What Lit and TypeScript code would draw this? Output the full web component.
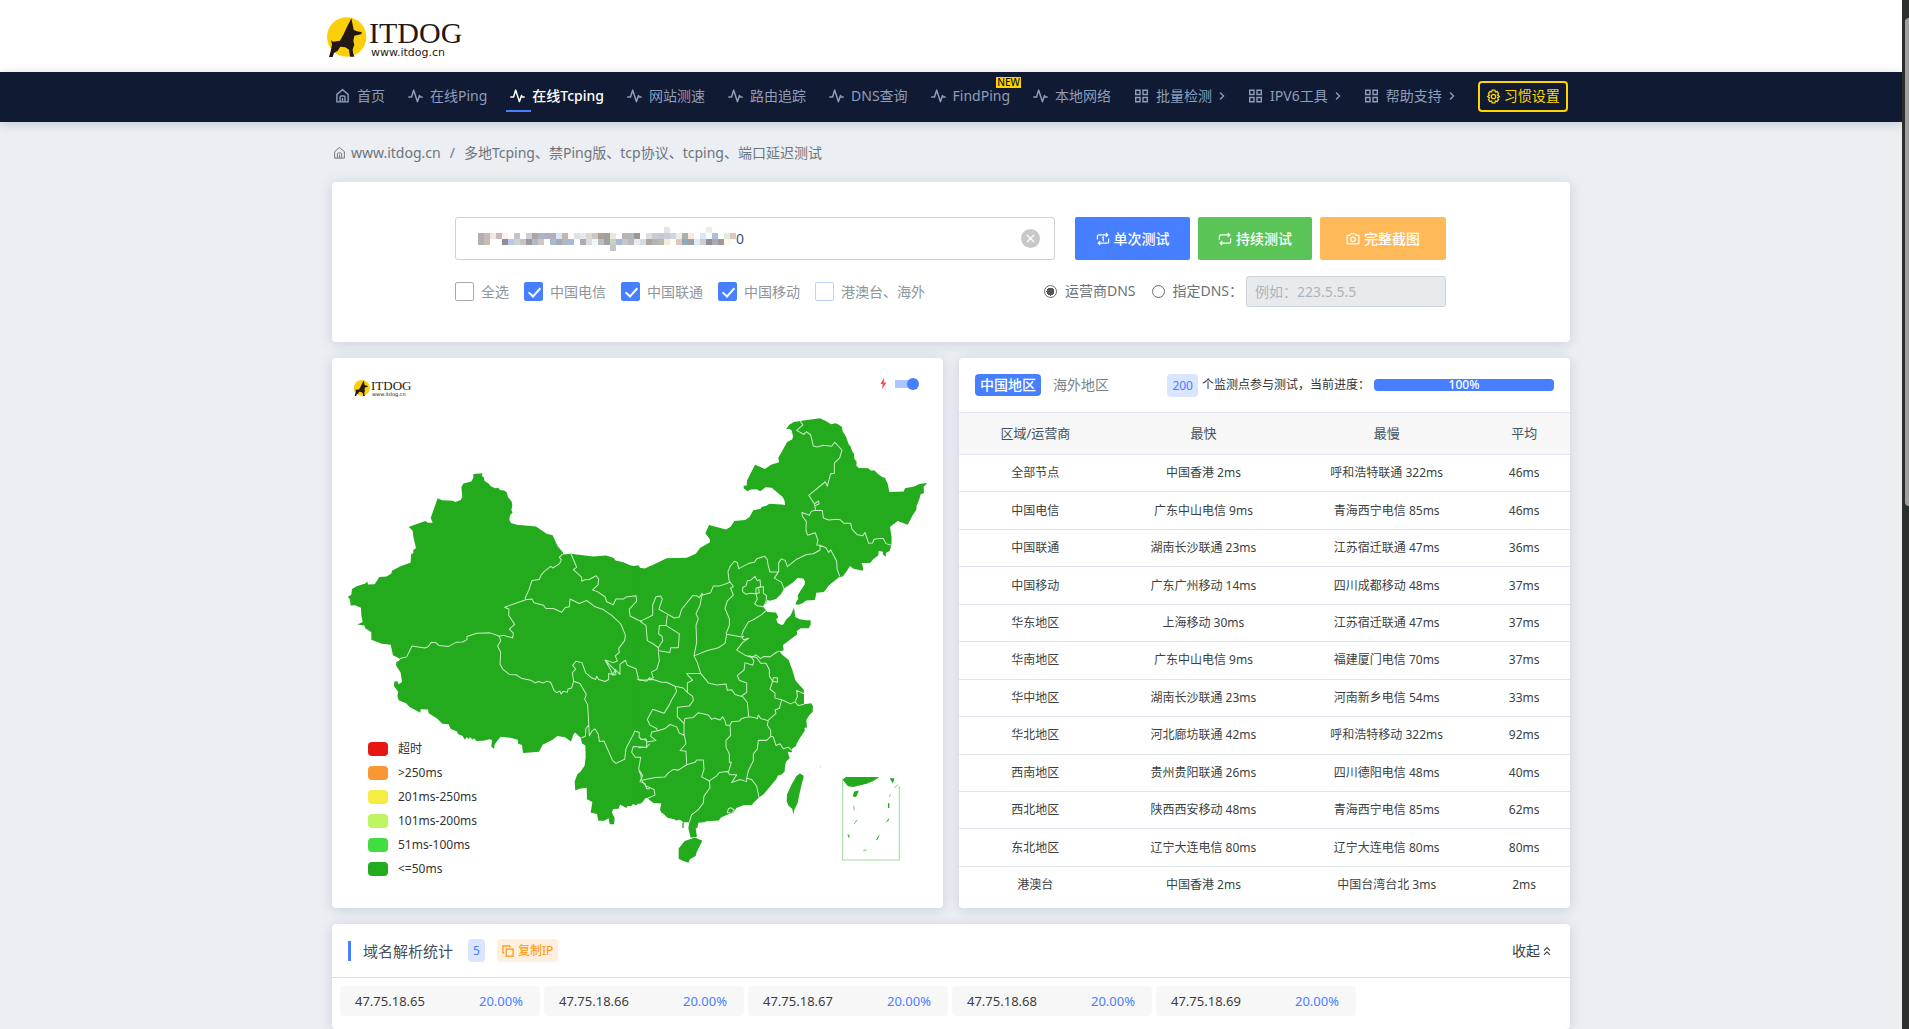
import { LitElement, html, css, svg, nothing } from "lit";
import { customElement } from "lit/decorators.js";

const homeIcon = html`<svg class="ico" viewBox="0 0 16 16" aria-hidden="true"><path d="M2 6.3 8 1.2l6 5.1V14.3H2Z M5.4 14V9a1 1 0 0 1 1-1h3.2a1 1 0 0 1 1 1v5 M8 10v4.2"/></svg>`;
const pulseIcon = html`<svg class="ico pulse" viewBox="0 0 16 16" aria-hidden="true"><path d="M.3 9H3.8L6 1.7l4 12.3L12.3 7.5l.8 1.5H15.7"/></svg>`;
const gridIcon = html`<svg class="ico" viewBox="0 0 16 16" aria-hidden="true"><path d="M1.8 1.8h4.6v4.6H1.8Z M9.6 1.8h4.6v4.6H9.6Z M1.8 9.6h4.6v4.6H1.8Z M9.6 9.6h4.6v4.6H9.6Z"/></svg>`;
const chevronIcon = html`<svg class="chev" viewBox="0 0 6 10" aria-hidden="true"><path d="M1 1.5 4.6 5 1 8.5"/></svg>`;
const gearIcon = html`<svg class="gear" viewBox="0 0 16 16" aria-hidden="true"><path d="M6.6 1.2h2.8l.6 1.9 1.9-.4 1.5 2.4L12.3 6.5l1.9 1.5-1.9 1.5 1.1 1.4-1.5 2.4-1.9-.4-.6 1.9H6.6l-.6-1.9-1.9.4-1.5-2.4L3.7 9.5 1.8 8l1.9-1.5L2.6 5.1l1.5-2.4 1.9.4Z"/><circle cx="8" cy="8" r="2.3"/></svg>`;
const onceIcon = html`<svg class="bico" viewBox="0 0 16 16" aria-hidden="true"><path d="M1.6 8.5V5A1.7 1.7 0 0 1 3.3 3.3H13 M11.2 1l2.3 2.3-2.3 2.3 M14.4 7.5V11a1.7 1.7 0 0 1-1.7 1.7H3 M4.8 15l-2.3-2.3 2.3-2.3 M7 6.6l1.3-.8v4.8"/></svg>`;
const loopIcon = html`<svg class="bico" viewBox="0 0 16 16" aria-hidden="true"><path d="M1.6 9V5A1.7 1.7 0 0 1 3.3 3.3H13 M11.2 1l2.3 2.3-2.3 2.3 M14.4 7V11a1.7 1.7 0 0 1-1.7 1.7H3 M4.8 15l-2.3-2.3 2.3-2.3"/></svg>`;
const cameraIcon = html`<svg class="bico" viewBox="0 0 16 16" aria-hidden="true"><path d="M1.2 4.8a1 1 0 0 1 1-1h2L5.6 2h4.8l1.4 1.8h2a1 1 0 0 1 1 1v7.7a1 1 0 0 1-1 1H2.2a1 1 0 0 1-1-1Z"/><circle cx="8" cy="8.4" r="2.6"/></svg>`;
const copyIcon = html`<svg class="copyico" viewBox="0 0 13 13" aria-hidden="true"><path d="M4.5 4.5h7.5v7.5H4.5Z M2.5 8.5H1V1h7.5v1.5"/></svg>`;
const upIcon = html`<svg class="upico" viewBox="0 0 8 10" aria-hidden="true"><path d="M1 4.6 4 1.6l3 3 M1 8.8l3-3 3 3"/></svg>`;
const boltIcon = html`<svg class="bolt" viewBox="0 0 8 13" aria-hidden="true"><path d="M4.6 0 .5 7H3l-.6 6L7.4 5.4H4.5Z"/></svg>`;

const dogMark = svg`
  <circle cx="80" cy="81" r="59" fill="#fccf0b"/>
  <path fill="#231815" d="M94 25 98 44 101 59 109 63 126 67 123 73 103 77 100 92 103 104 98 118 99 128 103 140H90L87 119 76 112 61 110 53 122 42 129 38 141H27L33 120 36 104 33 90 39 95 60 92 70 74 78 57Z"/>`;

const logo = html`<svg class="logo" viewBox="0 0 48 44" aria-hidden="true"><g transform="translate(-7 -5) scale(.33333)">${dogMark}</g></svg>`;

const NAV: { label: string; kind: "home" | "pulse" | "grid"; active?: boolean; badge?: string }[] = [
  { label: "首页", kind: "home" },
  { label: "在线Ping", kind: "pulse" },
  { label: "在线Tcping", kind: "pulse", active: true },
  { label: "网站测速", kind: "pulse" },
  { label: "路由追踪", kind: "pulse" },
  { label: "DNS查询", kind: "pulse" },
  { label: "FindPing", kind: "pulse", badge: "NEW" },
  { label: "本地网络", kind: "pulse" },
  { label: "批量检测", kind: "grid" },
  { label: "IPV6工具", kind: "grid" },
  { label: "帮助支持", kind: "grid" },
];

const CARRIERS: [string, boolean, string][] = [
  ["全选", false, "dark"],
  ["中国电信", true, ""],
  ["中国联通", true, ""],
  ["中国移动", true, ""],
  ["港澳台、海外", false, ""],
];

const ROWS = [
  ["全部节点", "中国香港 2ms", "呼和浩特联通 322ms", "46ms"],
  ["中国电信", "广东中山电信 9ms", "青海西宁电信 85ms", "46ms"],
  ["中国联通", "湖南长沙联通 23ms", "江苏宿迁联通 47ms", "36ms"],
  ["中国移动", "广东广州移动 14ms", "四川成都移动 48ms", "37ms"],
  ["华东地区", "上海移动 30ms", "江苏宿迁联通 47ms", "37ms"],
  ["华南地区", "广东中山电信 9ms", "福建厦门电信 70ms", "37ms"],
  ["华中地区", "湖南长沙联通 23ms", "河南新乡电信 54ms", "33ms"],
  ["华北地区", "河北廊坊联通 42ms", "呼和浩特移动 322ms", "92ms"],
  ["西南地区", "贵州贵阳联通 26ms", "四川德阳电信 48ms", "40ms"],
  ["西北地区", "陕西西安移动 48ms", "青海西宁电信 85ms", "62ms"],
  ["东北地区", "辽宁大连电信 80ms", "辽宁大连电信 80ms", "80ms"],
  ["港澳台", "中国香港 2ms", "中国台湾台北 3ms", "2ms"],
];

const LEGEND = [
  ["超时", "#e61610"],
  [">250ms", "#f89833"],
  ["201ms-250ms", "#f6ed44"],
  ["101ms-200ms", "#bef663"],
  ["51ms-100ms", "#42dd3f"],
  ["<=50ms", "#24aa1d"],
];

const IPS = ["47.75.18.65", "47.75.18.66", "47.75.18.67", "47.75.18.68", "47.75.18.69"];

// Pixelated mask over the tested address: [row, first column, colours]
const MASK: [number, number, string][] = [
  [0, 31, "e4e4e8"],
  [0, 38, "f4ece0"],
  [1, 0, "b0b0b4 c8bab6 f2e9e0 c8bab6 fcf2ec - bfc5c8 - cfcdd5 b0a49c acb4c6 b0aec6 b0b2b6 d4e8fc c6b6ae - dde2e4 e0e8f2 ded8cc c8c8c8 ab9f96 a0a0a2 ece8d8 - bcb4b0 b0b8be 9e949a - dcdce4 cccccf c2cad8 cccad2 c8d8ea f4ece0 aab0ae faeade - dce6f2 f4ffff b0bedc - e6e8e2 dec8bc"],
  [2, 0, "b0b0b4 ceb8b4 - - 8f8f95 b4cae6 cfd1d4 bec4c8 9f989c acbacc d2c6c2 - a4bcd0 a8aaae b0b8be a4bcd6 - aaacb0 dcdce4 ecf8fa bcbcc0 a0a0a2 ceccc4 a4bad0 c0c8cc b8babe ececf0 d2dae6 b0a49c b0b2b6 b8bab2 faeade - dec8bc 90a8b8 9e9fa2 dcecf4 d0ccc6 8f8f95 acacb0 9f989c fff6ee fafcfc"],
  [3, 22, "c4c4c4"],
];

const WEST =
  "M430 352 457 350 456 358 462 363 463 372 476 380 482 388 496 394 505 393 510 399 522 401 530 406 534 421 545 433 547 446 544 459 548 465 540 475 538 487 543 497 560 502 618 507 650 529 668 533 683 566 698 583 700 590 722 588 790 596 828 593 850 600 857 608 880 613 900 622 912 624 926 622 930 629 945 632 960 624 1000 640 1000 1290 960 1310 946 1311 938 1322 930 1328 925 1327 918 1333 910 1328 903 1335 893 1334 889 1340 870 1330 866 1342 849 1343 846 1354 854 1370 852 1388 839 1388 836 1370 823 1378 805 1378 801 1358 782 1354 787 1322 771 1314 770 1280 748 1283 736 1288 734 1262 742 1240 752 1232 764 1214 767 1190 766 1155 756 1149 752 1132 735 1117 730 1124 723 1143 705 1131 682 1127 668 1138 638 1153 627 1174 600 1176 579 1177 576 1154 565 1150 563 1138 541 1132 512 1129 502 1141 494 1152 492 1165 484 1159 486 1139 478 1137 460 1141 439 1142 432 1134 428 1138 420 1130 416 1137 410 1130 405 1138 397 1126 385 1122 380 1113 362 1106 356 1092 337 1091 322 1076 296 1060 294 1049 272 1048 271 1058 240 1042 228 1030 206 1021 202 1008 205 997 200 990 192 980 193 966 202 965 206 974 216 967 212 940 198 918 199 908 210 902 208 898 189 888 182 857 155 854 124 842 124 820 106 808 103 800 82 797 98 790 94 770 93 748 75 740 62 741 60 724 54 715 64 709 66 692 80 684 106 676 112 670 114 679 134 678 148 657 170 655 184 646 186 638 210 626 242 614 243 590 250 586 250 576 258 572 250 538 248 520 236 509 260 500 286 491 294 496 308 496 302 482 323 424 336 430 368 431 376 435 392 429 397 420 394 391 400 380 424 374 430 363Z";

const EAST =
  "M-20 640 0 630 14 632 30 625 80 601 140 600 167 588 181 570 210 554 210 546 196 527 207 503 258 516 272 508 283 491 315 488 328 480 340 459 362 455 366 449 378 447 388 440 425 442 435 444 434 432 428 420 395 393 377 391 361 403 350 397 332 398 322 403 311 394 311 387 320 386 321 371 345 325 375 337 393 325 417 317 415 304 425 287 441 258 457 249 459 240 455 223 449 219 439 219 447 207 461 198 480 195 540 187 559 196 573 205 587 202 594 205 606 213 608 226 615 236 619 244 626 264 632 271 636 284 642 292 643 307 650 316 649 327 656 334 685 335 692 342 704 342 713 351 728 362 736 364 737 370 743 380 748 405 791 404 795 394 806 392 823 389 836 382 862 378 851 390 852 408 842 412 838 427 830 446 829 458 818 474 803 502 773 491 750 509 755 540 754 563 749 580 738 585 737 597 729 590 729 582 716 580 715 592 699 605 690 615 665 615 670 632 668 638 640 632 630 624 620 640 608 655 598 657 567 681 552 701 529 703 525 725 499 726 486 735 475 739 466 737 470 728 475 722 473 711 484 694 494 679 495 669 490 661 472 660 460 672 432 691 424 706 408 722 390 727 382 725 378 735 369 743 378 756 382 760 408 762 415 775 409 782 412 792 424 799 430 797 438 783 452 770 462 748 466 775 479 782 498 785 512 785 512 798 506 808 482 808 470 817 472 826 456 838 429 858 431 874 418 876 427 887 446 902 458 935 466 962 479 977 491 990 492 1005 492 1033 514 1030 519 1040 518 1055 508 1066 499 1080 501 1102 494 1103 494 1112 480 1132 470 1149 468 1157 456 1165 456 1175 443 1174 449 1193 438 1203 435 1216 434 1232 424 1242 414 1244 409 1254 389 1278 371 1299 357 1309 340 1325 336 1331 310 1332 289 1340 281 1353 263 1359 243 1368 236 1377 200 1379 193 1382 175 1384 172 1399 167 1400 171 1425 152 1428 145 1400 148 1382 131 1382 131 1399 128 1399 128 1380 119 1375 108 1377 103 1373 82 1369 73 1359 65 1354 60 1346 64 1327 41 1325 33 1320 23 1311 16 1310 -20 1300Z";

const ISLANDS =
  "M152 1432 165 1427 187 1437 178 1455 170 1470 167 1482 150 1492 145 1502 130 1497 116 1490 116 1460 134 1438Z M480 1238 490 1244 491 1250 486 1265 478 1300 473 1325 463 1345 460 1360 457 1343 445 1333 440 1320 441 1300 455 1270 470 1245Z M607 1256 618 1248H718L700 1260 680 1268 640 1278 624 1276Z M749 1252H763L759 1268Z M643 1291 656 1288 651 1303 646 1308 638 1305Z M744 1325 748 1326 748 1340 744 1340Z M737 1384 747 1369 746 1377Z M708 1434 720 1416 713 1434Z M622 1418 628 1420 628 1432Z";

const ISLAND_LINES =
  "M641 1333 643 1347 M642 1388 652 1375 M670 1466 680 1464 M764 1280 773 1271 M748 1307 752 1300 M540 1218 542 1218 M128 1385V1398";

const WEST_LINES =
  "M698 589 688 598 694 606 688 618 668 630 662 625 643 640 633 651 628 664 606 667 597 694 586 718 587 724 524 746 537 752 536 770 554 797 538 811 550 823 548 837 520 829 505 833 M210 898 230 893 246 861 284 867 294 863 304 850 318 851 326 859 356 862 378 850 398 849 411 842 411 833 440 823 480 822 508 831 512 845 503 861 512 880 510 914 518 929 538 945 558 946 574 956 605 963 615 970 625 966 640 970 650 965 662 968 672 992 680 999 690 994 693 1003 700 995 712 998 714 988 725 985 731 965 750 972 769 1004 764 1018 773 1035 778 1126 786 1112 795 1106 805 1122 808 1143 822 1142 848 1200 858 1208 884 1196 888 1164 898 1145 910 1123 914 1112 928 1117 927 1130 935 1137 948 1136 950 1147 M776 1095 768 1105 766 1128 754 1132 M731 965 727 940 737 929 728 918 738 906 756 910 767 940 785 955 797 960 800 950 806 960 825 966 836 960 836 942 848 945 840 928 825 902 850 910 862 905 856 890 868 880 866 868 884 845 886 828 872 795 845 770 820 753 795 745 770 726 748 735 720 722 718 745 705 748 695 761 670 750 648 750 640 740 612 733 606 722 587 724 M723 588 740 628 730 635 755 657 755 669 765 665 778 664 798 653 806 662 804 680 788 695 802 700 825 715 830 730 850 739 858 722 880 722 888 716 918 712 920 728 898 752 900 772 924 784 935 788 M825 902 855 933 848 947 858 945 855 930 870 945 870 915 886 903 892 918 918 928 926 960 950 965 960 953 M960 1150 950 1160 910 1158 905 1175 916 1190 932 1190 926 1225 938 1245 930 1262 945 1268 950 1283 960 1283";

const EAST_LINES =
  "M480 195 489 207 470 223 492 235 499 227 512 236 520 269 532 272 550 267 575 270 584 258 606 281 599 304 583 320 583 350 572 351 562 388 556 375 506 415 523 440 527 459 547 460 550 482 566 488 590 486 600 487 612 498 632 498 636 515 652 532 668 535 675 525 686 557 698 556 702 545 720 543 730 543 738 558 754 563 M523 440 536 432 537 441 526 445 M527 459 514 462 508 474 486 466 487 477 499 492 498 520 503 533 526 526 534 548 530 562 540 563 558 570 566 584 572 576 590 610 591 632 599 655 M540 563 540 577 520 588 500 590 470 604 442 626 436 608 424 603 416 615 416 640 403 660 424 672 432 691 M416 642 390 642 384 620 382 605 374 595 350 603 344 612 325 617 296 632 292 614 283 610 270 626 264 640 267 667 270 672 240 683 220 683 212 703 188 710 186 705 178 718 170 712 158 712 125 752 118 775 103 778 80 765 57 752 67 722 62 713 48 715 38 740 38 770 0 788 M267 667 280 685 272 690 280 710 262 727 255 750 268 780 268 800 258 825 M186 710 180 740 168 765 175 780 168 800 170 850 162 890 200 875 235 866 255 853 260 826 305 834 312 832 M305 830 310 815 325 790 340 783 365 768 378 756 M306 834 310 842 326 838 308 850 290 873 315 888 335 895 348 887 362 898 370 892 390 893 408 880 418 876 M318 683 322 668 332 666 345 655 352 668 360 665 362 685 348 690 348 706 330 705 318 708 308 700 308 688Z M352 690 370 685 370 705 380 712 378 730 370 745 352 742 344 736 352 722 348 706 358 703 356 692 M0 788 18 800 22 845 40 855 55 866 68 845 66 832 56 825 58 800 78 800 82 770 M78 800 118 825 115 866 92 866 90 880 55 875 55 866 M55 878 58 905 50 930 34 938 40 955 25 960 M-10 958 0 962 40 960 65 968 80 968 105 980 130 985 142 998 M162 890 172 910 182 942 140 942 146 950 158 962 142 970 142 998 158 1010 160 1022 148 1038 112 1042 112 1070 132 1090 132 1125 118 1118 110 1100 90 1093 75 1105 52 1112 50 1105 30 1095 22 1078 38 1048 72 1060 88 1035 95 1020 110 995 105 980 M182 942 205 970 230 976 258 973 262 992 275 990 285 1004 306 1010 M335 895 342 905 338 918 315 910 312 932 292 948 298 962 320 970 320 998 306 1008 322 1028 326 1068 M325 890 350 895 362 912 378 912 388 930 388 950 398 965 412 968 412 955 400 955 398 965 390 988 405 1000 405 1015 425 1020 452 1032 465 1026 475 1037 492 1033 M465 1026 472 1010 470 992 492 1002 M425 1020 418 1045 405 1050 408 1060 385 1080 382 1095 392 1110 392 1128 400 1130 408 1155 420 1150 430 1165 445 1160 456 1170 M385 1082 362 1075 355 1065 352 1076 342 1072 326 1070 305 1075 298 1083 275 1085 270 1095 272 1125 258 1140 258 1160 268 1180 268 1205 274 1205 265 1235 M392 1128 380 1140 355 1140 352 1165 340 1180 340 1200 325 1230 320 1252 M132 1090 135 1075 160 1072 175 1058 205 1065 215 1078 222 1074 240 1080 248 1070 255 1082 258 1095 270 1095 M112 1070 134 1092 M50 1112 35 1115 32 1128 48 1140 20 1145 20 1160 -5 1162 M20 1140 0 1136 M132 1120 138 1150 120 1170 138 1172 140 1212 115 1228 100 1226 85 1236 75 1248 45 1250 5 1258 2 1240 -4 1230 M140 1212 165 1205 170 1198 190 1198 192 1225 185 1248 208 1260 230 1245 238 1235 262 1232 270 1242 290 1242 275 1265 300 1256 320 1262 320 1252 335 1256 350 1275 357 1309 M208 1260 210 1280 192 1305 190 1325 175 1345 155 1360 148 1382 M5 1258 18 1275 42 1285 45 1302 23 1311 M262 1353 265 1343 272 1339 283 1346 276 1356Z";

@customElement("app-root")
export class AppRoot extends LitElement {
  static styles = css`
    :host {
      display: flex;
      min-height: 100vh;
      font: 14px/20px "Noto Sans", "Noto Sans CJK SC", sans-serif;
      color: #3a3d41;
      background: #ebeef3;
    }
    * { box-sizing: border-box; }
    button, input { font: inherit; color: inherit; margin: 0; }
    button { border: 0; background: none; padding: 0; cursor: pointer; }
    a { color: inherit; text-decoration: none; }
    svg { fill: none; stroke: currentColor; flex: none; display: block; }
    .page { flex: 1; min-width: 0; }
    .rail { width: 7px; background: #2a2e2c; padding: 18px 0 0 3px; }
    .thumb { height: 488px; border-radius: 4px 0 0 4px; background: #9f9f9f; }

    .wrap { max-width: 1238px; margin: 0 auto; }
    .top { background: #fff; height: 72px; }
    .brand { max-width: 1248px; margin: 0 auto; display: flex; padding-top: 15px; }
    .logo { width: 48px; height: 44px; stroke: none; margin-right: -6px; }
    .words { display: flex; flex-direction: column; color: #231815; }
    .w1 { font: 30px/28px "Liberation Serif", serif; margin-top: 4px; }
    .w2 { font: 11px/12px "DejaVu Sans", sans-serif; padding-left: 2px; }

    .nav { background: #111a33; box-shadow: 0 2px 10px rgba(40, 50, 90, .2); color: #8f9db8; }
    .nav .wrap { height: 50px; display: flex; align-items: center; gap: 23px; padding: 0 3px 2px 3px; }
    .item { display: flex; align-items: center; gap: 7px; position: relative; white-space: nowrap; }
    .item.active { color: #fff; font-weight: 500; }
    .item.active::after { content: ""; position: absolute; left: -4px; bottom: -6px; width: 25px; height: 2px; background: #467fff; }
    .ico { width: 15px; height: 16px; stroke-width: 1.5; }
    .pulse { stroke-width: 1.6; stroke-linejoin: round; }
    .chev { width: 6px; height: 10px; stroke-width: 1.3; }
    .new { position: absolute; right: -11px; top: -9px; width: 25px; height: 11px; background: #ffd500; color: #111; font-size: 10px; line-height: 11px; text-align: center; font-weight: 500; }
    .prefs { flex: none; display: flex; align-items: center; gap: 3px; justify-content: center; border: 2px solid #ffd500; border-radius: 4px; color: #ffd500; width: 90px; height: 31px; margin-left: auto; white-space: nowrap; }
    .gear { width: 15px; height: 15px; stroke-width: 1.4; }

    .crumb { display: flex; gap: 9px; align-items: center; color: #6e757c; height: 60px; padding: 2px 0 0 1px; }
    .crumb a { display: flex; align-items: center; gap: 5px; }
    .crumb .ico { width: 13px; height: 14px; stroke-width: 1.2; }

    .card { background: #fff; border-radius: 4px; box-shadow: 0 2px 12px rgba(90, 105, 135, .22); }
    .search { height: 160px; padding: 35px 124px 0 123px; display: grid; grid-template-rows: 43px 32px; row-gap: 15px; }
    .line { display: flex; align-items: center; }
    .hostbox { flex: 1; height: 43px; border: 1px solid #cdd1da; border-radius: 3px; display: flex; align-items: center; padding: 0 14px 0 22px; margin-right: 20px; min-width: 0; }
    .mask { width: 258px; height: 24px; stroke: none; }
    .hostbox input { flex: 1; min-width: 0; border: 0; outline: 0; padding: 0; height: 24px; background: none; color: #39508a; }
    .clear { width: 19px; height: 19px; border-radius: 50%; background: #c8c8c8; color: #fff; display: grid; place-items: center; }
    .clear svg { width: 9px; height: 9px; stroke-width: 1.3; }
    .acts { display: flex; gap: 8px; }
    .act { height: 43px; width: 114px; border-radius: 2px; color: #fff; display: flex; align-items: center; justify-content: center; gap: 4px; font-weight: 500; white-space: nowrap; }
    .act.blue { background: #467fff; width: 115px; }
    .act.green { background: #5ac456; }
    .act.amber { background: #ffb959; width: 126px; }
    .bico { width: 14px; height: 14px; stroke-width: 1.4; }

    .opts { justify-content: space-between; }
    .group { display: flex; align-items: center; }
    .checks { gap: 15px; padding-top: 1px; }
    .check { display: flex; align-items: center; gap: 7px; color: #90959b; white-space: nowrap; }
    .check input { appearance: none; width: 19px; height: 19px; border: 1px solid #bdd0ff; border-radius: 2px; background: #fff; position: relative; }
    .check input.dark { border-color: #a5a9b0; }
    .check input:checked { background: #467fff; border-color: #467fff; }
    .check input:checked::after { content: ""; position: absolute; left: 6px; top: 2px; width: 5px; height: 10px; border: solid #fff; border-width: 0 2px 2px 0; transform: rotate(42deg); }
    .radio { display: flex; align-items: center; gap: 8px; color: #6b7178; margin-right: 17px; white-space: nowrap; }
    .radio.last { gap: 7px; margin-right: 0; }
    .radio input { appearance: none; width: 13px; height: 13px; border: 1px solid #6a6a6a; border-radius: 50%; background: #fff; }
    .radio input:checked { background: radial-gradient(circle, #555 0 4px, #fff 4px); }
    .dns { width: 200px; height: 31px; border: 1px solid #ced3da; border-radius: 3px; background: #e8ebee; padding: 0 8px; margin-left: 3px; }
    .dns::placeholder { color: #adb4bc; opacity: 1; }

    .pair { display: grid; grid-template-columns: 1fr 1fr; gap: 16px; margin: 16px 0; }
    .mapcard { position: relative; }
    .map { width: 100%; height: auto; stroke: none; }
    .land { fill: #24aa1d; }
    .lines { stroke: #c9ecc6; stroke-width: 3; stroke-linejoin: round; }
    .ilines { stroke: #24aa1d; stroke-width: 2; }
    .frame { stroke: #9fd99b; stroke-width: 3; }
    .mini1 { font: 13px "Liberation Serif", serif; fill: #231815; }
    .mini2 { font: 5px "DejaVu Sans", sans-serif; fill: #231815; }
    .legend { position: absolute; left: 36px; bottom: 32px; margin: 0; padding: 0; list-style: none; display: grid; gap: 10px; font-size: 12px; line-height: 14px; color: #333; }
    .legend li { display: flex; gap: 10px; }
    .swatch { width: 20px; height: 14px; border-radius: 4px; }
    .speed { position: absolute; right: 24px; top: 19px; display: flex; gap: 8px; align-items: center; color: #ff4d4f; }
    .bolt { width: 7px; height: 13px; fill: currentColor; stroke: none; }
    .switch { appearance: none; width: 24px; height: 12px; background: linear-gradient(#adc6ff, #adc6ff) 0 2px / 22px 8px no-repeat; border-radius: 4px; position: relative; }
    .switch::after { content: ""; position: absolute; right: 0; top: 0; width: 12px; height: 12px; border-radius: 50%; background: #467fff; }

    .stats { display: flex; flex-direction: column; padding-bottom: 5px; }
    .shead { display: flex; align-items: center; height: 54px; padding: 0 16px; }
    .tab { height: 22px; padding: 0 5px; border-radius: 4px; color: #7b838a; margin-right: 7px; }
    .tab.on { background: #467fff; color: #fff; font-weight: 500; }
    .status { margin-left: auto; display: flex; align-items: center; gap: 4px; font-size: 12px; color: #333; white-space: nowrap; }
    .tag { height: 23px; padding: 0 5px; border-radius: 4px; background: #dae5ff; color: #467fff; font-size: 12px; line-height: 23px; }
    .bar { width: 180px; height: 12px; border-radius: 4px; background: #e9ecef; }
    .fill { height: 100%; border-radius: 4px; background: #467fff; color: #fff; text-align: center; font-size: 12px; line-height: 12px; font-weight: 500; }
    .table { flex: 1; width: 100%; table-layout: fixed; border-collapse: collapse; font-size: 12px; text-align: center; color: #3c3f42; }
    .table th { height: 42px; padding: 0 0 2px; font-weight: 400; font-size: 13px; color: #44525c; background: #f7f7f7; border-top: 1px solid #dfe6ed; border-bottom: 1px solid #dfe6ed; }
    .table td { padding: 0; border-top: 1px solid #dfe6ed; }
    .c1 { width: 25%; } .c2 { width: 30%; } .c3 { width: 30%; } .c4 { width: 15%; }

    .rhead { display: flex; align-items: center; height: 54px; padding: 0 19px 0 16px; border-bottom: 1px solid #dee2e6; }
    .rhead h2 { margin: 0 15px 0 0; padding-left: 12px; border-left: 3px solid #467fff; font-size: 15px; line-height: 20px; font-weight: 400; color: #45515a; }
    .copy { display: flex; align-items: center; gap: 4px; margin-left: 12px; height: 23px; padding: 0 5px; border-radius: 4px; background: #ffefdc; color: #ff9408; font-size: 12px; white-space: nowrap; }
    .copyico { width: 12px; height: 12px; stroke-width: 1.3; }
    .fold { margin-left: auto; display: flex; align-items: center; gap: 3px; }
    .upico { width: 8px; height: 10px; stroke-width: 1.1; }
    .chips { display: flex; flex-wrap: wrap; gap: 4px; padding: 8px 8px 13px; }
    .chip { width: 200px; height: 30px; border-radius: 4px; background: #f7f7f7; padding: 0 17px 0 15px; display: flex; justify-content: space-between; align-items: center; font-size: 13px; }
    .pct { color: #467fff; }
  `;

  private navItem(n: (typeof NAV)[number]) {
    const icon = n.kind === "home" ? homeIcon : n.kind === "pulse" ? pulseIcon : gridIcon;
    return html`<a class="item ${n.active ? "active" : ""}" href="#">${icon}<span>${n.label}</span>${n.kind === "grid" ? chevronIcon : nothing}${n.badge ? html`<span class="new">${n.badge}</span>` : nothing}</a>`;
  }

  private map() {
    return html`<svg class="map" viewBox="0 0 611 550" role="img" aria-label="中国">
      <g transform="translate(19 19) scale(.135)">${dogMark}</g>
      <text class="mini1" x="39" y="32">ITDOG</text>
      <text class="mini2" x="40" y="38">www.itdog.cn</text>
      <g transform="translate(-2 -3) scale(.33333 .33805)"><path class="land" d=${WEST}/></g>
      <g transform="translate(308 -3) scale(.33333 .33805)">
        <path class="land" d=${EAST}/><path class="land" d=${ISLANDS}/>
        <path class="ilines" d=${ISLAND_LINES}/>
        <path class="frame" d="M608 1256V1494H778V1275"/>
        <path class="lines" d=${EAST_LINES}/>
      </g>
      <g transform="translate(-2 -3) scale(.33333 .33805)"><path class="lines" d=${WEST_LINES}/></g>
    </svg>`;
  }

  render() {
    return html`
      <div class="page">
        <header class="top"><a class="brand" href="#">${logo}<span class="words"><span class="w1">ITDOG</span><span class="w2">www.itdog.cn</span></span></a></header>
        <nav class="nav"><div class="wrap">${NAV.map((n) => this.navItem(n))}<button class="prefs">${gearIcon}习惯设置</button></div></nav>
        <main class="wrap">
          <div class="crumb"><a href="#">${homeIcon}www.itdog.cn</a><span>/</span><span>多地Tcping、禁Ping版、tcp协议、tcping、端口延迟测试</span></div>

          <section class="card search">
            <div class="line">
              <div class="hostbox">
                <svg class="mask" viewBox="0 0 43 4" preserveAspectRatio="none" shape-rendering="crispEdges" aria-hidden="true">
                  ${MASK.map(([r, c, s]) => s.split(" ").map((k, i) => (k === "-" ? nothing : svg`<rect x=${c + i} y=${r} width="1" height="1" fill=${"#" + k}/>`)))}
                </svg>
                <input aria-label="域名" .value=${"0"} />
                <button class="clear" aria-label="清除"><svg viewBox="0 0 9 9"><path d="M1 1l7 7M8 1 1 8"/></svg></button>
              </div>
              <div class="acts">
                <button class="act blue">${onceIcon}单次测试</button>
                <button class="act green">${loopIcon}持续测试</button>
                <button class="act amber">${cameraIcon}完整截图</button>
              </div>
            </div>
            <div class="line opts">
              <div class="group checks">
                ${CARRIERS.map(([t, on, cls]) => html`<label class="check"><input type="checkbox" class=${cls} .checked=${on} />${t}</label>`)}
              </div>
              <div class="group">
                <label class="radio"><input type="radio" name="dns" checked />运营商DNS</label>
                <label class="radio last"><input type="radio" name="dns" />指定DNS：</label>
                <input class="dns" aria-label="指定DNS" placeholder="例如：223.5.5.5" disabled />
              </div>
            </div>
          </section>

          <div class="pair">
            <section class="card mapcard">
              ${this.map()}
              <label class="speed">${boltIcon}<input class="switch" type="checkbox" role="switch" aria-label="加速" checked /></label>
              <ul class="legend">${LEGEND.map(([t, c]) => html`<li><span class="swatch" style="background:${c}"></span>${t}</li>`)}</ul>
            </section>
            <section class="card stats">
              <div class="shead">
                <button class="tab on">中国地区</button><button class="tab">海外地区</button>
                <div class="status"><span class="tag">200</span><span>个监测点参与测试，当前进度：</span>
                  <div class="bar" role="progressbar" aria-valuenow="100"><div class="fill" style="width:100%">100%</div></div></div>
              </div>
              <table class="table">
                <thead><tr><th class="c1">区域/运营商</th><th class="c2">最快</th><th class="c3">最慢</th><th class="c4">平均</th></tr></thead>
                <tbody>${ROWS.map((r) => html`<tr>${r.map((c) => html`<td>${c}</td>`)}</tr>`)}</tbody>
              </table>
            </section>
          </div>

          <section class="card">
            <div class="rhead"><h2>域名解析统计</h2><span class="tag">5</span><button class="copy">${copyIcon}复制IP</button><button class="fold">收起${upIcon}</button></div>
            <div class="chips">${IPS.map((ip) => html`<div class="chip"><span>${ip}</span><span class="pct">20.00%</span></div>`)}</div>
          </section>
        </main>
      </div>
      <div class="rail" aria-hidden="true"><div class="thumb"></div></div>
    `;
  }
}
